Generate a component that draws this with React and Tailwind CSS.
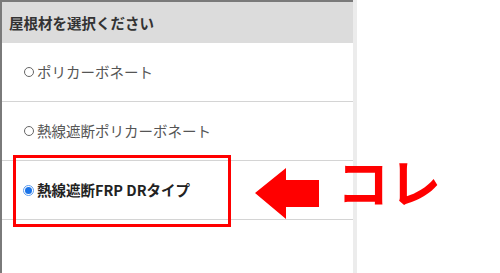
const font = { fontFamily: '"Noto Sans CJK JP", "Noto Sans", sans-serif' }

const options = [
  { label: 'ポリカーボネート', checked: false },
  { label: '熱線遮断ポリカーボネート', checked: false },
  { label: '熱線遮断FRP DRタイプ', checked: true },
]

function Radio({ checked }) {
  if (checked) {
    return (
      <span className="w-[11px] h-[11px] rounded-full border border-[#5b9cf0] bg-white flex items-center justify-center mr-[3px]">
        <span className="w-[7px] h-[7px] rounded-full bg-[#1a73e8]" />
      </span>
    )
  }
  return <span className="w-[10px] h-[10px] rounded-full border border-[#666] mr-[3px] ml-[1px]" />
}

export default function App() {
  return (
    <div className="relative w-[500px] h-[273px] bg-white flex overflow-hidden" style={font}>
      {/* Panel */}
      <div className="w-[353px] h-full border-l-2 border-t-2 border-[#7a7a7a] flex flex-col">
        <div className="h-[41px] bg-[#dcdcdc] flex items-center pl-[7px] text-[14.5px] font-bold text-[#333]">
          屋根材を選択ください
        </div>
        {options.map(opt => (
          <div
            key={opt.label}
            className="h-[59px] border-b border-[#d4d4d4] flex items-center pl-[21px] text-[14.5px]"
          >
            <Radio checked={opt.checked} />
            <span className={opt.checked ? 'font-bold text-[#222]' : 'text-[#555]'}>{opt.label}</span>
          </div>
        ))}
      </div>
      <div className="w-[4px] h-full bg-[#ececec]" />

      {/* Annotation: red frame */}
      <div className="absolute left-[13px] top-[155px] w-[218px] h-[72px] border-[3px] border-[#ff0000]" />

      {/* Annotation: arrow */}
      <svg className="absolute left-0 top-0" width="500" height="273">
        <polygon points="255,193 286,168 286,180 319,180 319,207 286,207 286,219" fill="#ff0000" />
      </svg>

      {/* Annotation: label */}
      <div className="absolute left-[337px] top-[155px] text-[52px] leading-none font-bold text-[#ff0000]">
        コレ
      </div>
    </div>
  )
}
